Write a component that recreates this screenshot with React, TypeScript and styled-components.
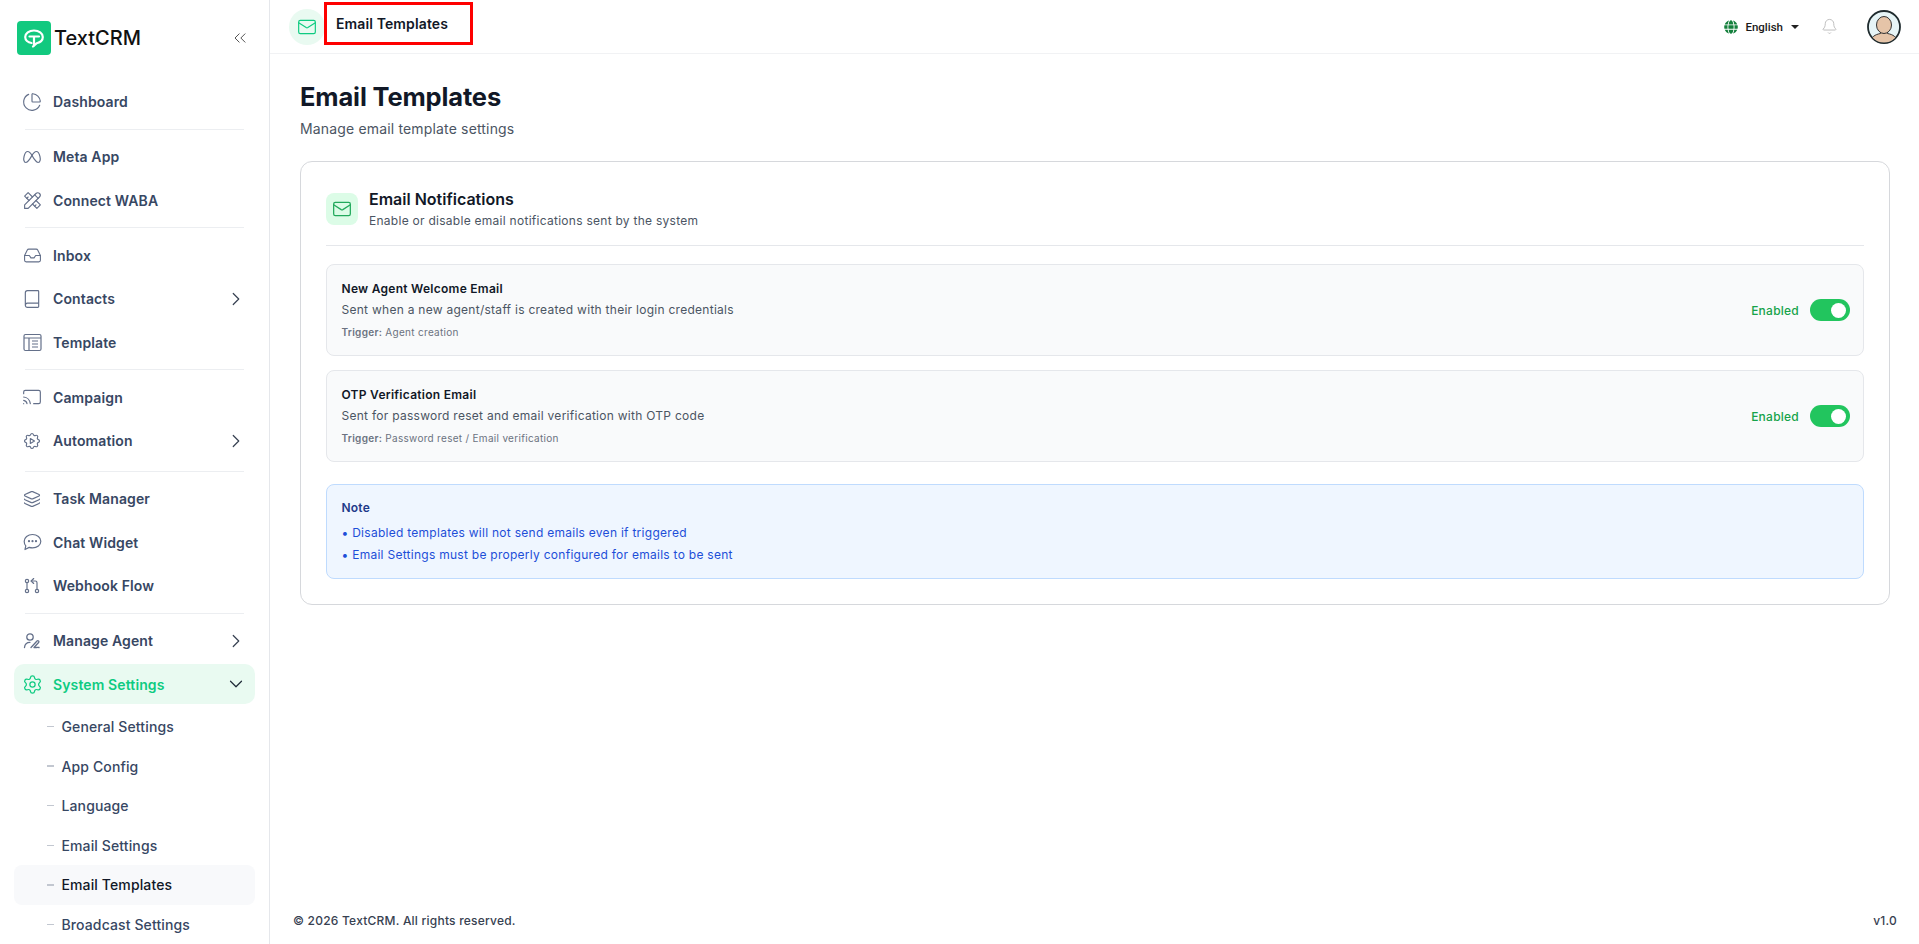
import React from "react";
import styled, { createGlobalStyle } from "styled-components";
import {
  ChevronsLeft, ChevronRight, ChevronDown, ChartPie, Inbox, Book, Cast, Layers,
  Settings, Mail, Bell,
} from "lucide-react";
import { TbBrandMeta, TbTools, TbSettingsAutomation, TbGitPullRequest } from "react-icons/tb";
import { FaGlobe } from "react-icons/fa";

const Global = createGlobalStyle`
  html, body { margin: 0; padding: 0; height: 100%; background: #fff; }
  body { font-family: Inter, "Liberation Sans", sans-serif; overflow: hidden; }
  * { box-sizing: border-box; }
`;

const Shell = styled.div`
  display: flex;
  width: 1919px;
  height: 944px;
  overflow: hidden;
`;

const Sidebar = styled.aside`
  width: 270px;
  flex: none;
  height: 944px;
  border-right: 1px solid #e5e7eb;
  overflow: hidden;
  padding: 21px 14px 0;
`;

const Brand = styled.div`
  display: flex;
  align-items: center;
  height: 34px;
  padding-left: 3px;
  margin-bottom: 26.5px;
`;

const BrandName = styled.span`
  font-family: Inter, sans-serif;
  font-size: 20px;
  font-weight: 500;
  color: #111;
  margin-left: 3px;
  flex: 1;
`;

const CollapseBtn = styled.span`
  display: flex;
  color: #444;
  margin-right: 5px;
`;

const NavItem = styled.div<{ $active?: boolean }>`
  display: flex;
  align-items: center;
  height: 40px;
  margin-bottom: ${(p) => (p.$active ? "2.5px" : "3.5px")};
  padding: 0 8px 0 9px;
  border-radius: 10px;
  font-size: 14px;
  font-weight: 600;
  letter-spacing: 0.12px;
  color: ${(p) => (p.$active ? "#0ecb81" : "#374763")};
  background: ${(p) => (p.$active ? "#e9faf1" : "transparent")};
`;

const NavIcon = styled.span<{ $active?: boolean }>`
  width: 18px;
  height: 18px;
  display: flex;
  align-items: center;
  justify-content: center;
  margin-right: 12px;
  flex: none;
  color: ${(p) => (p.$active ? "#0ecb81" : "#64708a")};
  & > svg { flex: none; }
`;

const NavLabel = styled.span`
  flex: 1;
`;

const Caret = styled.span<{ $dark?: boolean }>`
  display: flex;
  color: ${(p) => (p.$dark ? "#1f2937" : "#374151")};
`;

const Divider = styled.div<{ $tall?: boolean }>`
  height: 1px;
  background: #eceef1;
  margin: ${(p) => (p.$tall ? "10px" : "7px")} 11px 7px;
`;

const SubItem = styled.div<{ $current?: boolean }>`
  display: flex;
  align-items: center;
  height: 40px;
  margin-bottom: -0.4px;
  padding-left: 33px;
  border-radius: 8px;
  font-size: 14px;
  font-weight: 500;
  letter-spacing: 0.12px;
  color: ${(p) => (p.$current ? "#111827" : "#374763")};
  background: ${(p) => (p.$current ? "#f8f9fb" : "transparent")};
  &::before {
    content: "";
    width: 7px;
    height: 1.5px;
    background: #c2c7d0;
    margin-right: 7.5px;
  }
`;

const Column = styled.div`
  flex: 1;
  min-width: 0;
  display: flex;
  flex-direction: column;
`;

const Header = styled.header`
  height: 54px;
  border-bottom: 1px solid #f1f2f4;
  display: flex;
  align-items: center;
  padding: 0 18px 0 19px;
`;

const HeaderIcon = styled.div`
  width: 36px;
  height: 36px;
  margin-right: -1px;
  border-radius: 50%;
  background: #e9faf1;
  color: #0ecb81;
  display: flex;
  align-items: center;
  justify-content: center;
`;

const HeaderTitle = styled.div`
  width: 149px;
  height: 43px;
  margin-bottom: 7px;
  border: 3px solid #fe0000;
  display: flex;
  align-items: center;
  padding-left: 9px;
  font-size: 14px;
  font-weight: 600;
  letter-spacing: 0.12px;
  color: #111827;
`;

const HeaderRight = styled.div`
  margin-left: auto;
  display: flex;
  align-items: center;
`;

const Lang = styled.div`
  display: flex;
  align-items: center;
  font-family: Roboto, sans-serif;
  font-size: 11.5px;
  font-weight: 500;
  gap: 6px;
  color: #15803d;
`;

const LangText = styled.span`
  color: #1a1a1a;
  margin-left: 1px;
`;

const LangCaret = styled.span`
  width: 0;
  height: 0;
  border-left: 4px solid transparent;
  border-right: 4px solid transparent;
  border-top: 4px solid #222;
  margin-left: 2px;
`;

const BellWrap = styled.span`
  display: flex;
  color: #b5b5b5;
  margin: 0 29px 0 22px;
`;

const Main = styled.main`
  flex: 1;
  padding: 25px 29px 0 30px;
`;

const PageTitle = styled.h1`
  margin: 0;
  font-size: 25.5px;
  letter-spacing: -0.15px;
  line-height: 36px;
  font-weight: 700;
  color: #111827;
`;

const PageSub = styled.p`
  margin: 3px 0 0;
  font-size: 14px;
  letter-spacing: 0.16px;
  line-height: 22px;
  color: #4b5563;
`;

const Card = styled.section`
  margin-top: 21px;
  border: 1px solid #d6d8dc;
  border-radius: 12px;
  padding: 25px;
  height: 444px;
`;

const CardHead = styled.div`
  display: flex;
  align-items: center;
  gap: 11px;
  margin-top: 1px;
  padding: 0 0 16px;
  border-bottom: 1px solid #e5e7eb;
`;

const CardIcon = styled.div`
  width: 32px;
  height: 32px;
  border-radius: 8px;
  background: #dcfce7;
  color: #22a95c;
  display: flex;
  align-items: center;
  justify-content: center;
`;

const CardTitle = styled.div`
  font-size: 16px;
  line-height: 22px;
  font-weight: 600;
  color: #111827;
`;

const CardSub = styled.div`
  font-size: 12px;
  letter-spacing: 0.27px;
  line-height: 16px;
  margin-top: 3px;
  color: #4b5563;
`;

const Row = styled.div`
  margin-top: 14px;
  height: 92px;
  border: 1px solid #e5e7eb;
  border-radius: 8px;
  background: #f9fafb;
  padding: 0 13px 0 14.5px;
  display: flex;
  align-items: center;
  justify-content: space-between;
`;

const FirstGap = styled.div`
  height: 4px;
`;

const RowTitle = styled.div`
  font-size: 12px;
  letter-spacing: 0.27px;
  line-height: 18px;
  font-weight: 600;
  color: #111827;
`;

const RowDesc = styled.div`
  font-size: 12px;
  letter-spacing: 0.27px;
  line-height: 18px;
  margin-top: 3px;
  color: #4b5563;
`;

const RowTrigger = styled.div`
  font-size: 10px;
  letter-spacing: 0.3px;
  line-height: 16px;
  margin-top: 5px;
  color: #6b7280;
  & b { font-weight: 600; }
`;

const Status = styled.div`
  display: flex;
  align-items: center;
  gap: 11px;
  font-size: 12px;
  letter-spacing: 0.24px;
  font-weight: 500;
  color: #16a34a;
`;

const Toggle = styled.span`
  width: 40px;
  height: 22px;
  border-radius: 11px;
  background: #22c55e;
  display: flex;
  align-items: center;
  justify-content: flex-end;
  padding-right: 4px;
  &::after {
    content: "";
    width: 15px;
    height: 15px;
    border-radius: 50%;
    background: #fff;
  }
`;

const Note = styled.div`
  margin-top: 22px;
  height: 95px;
  border: 1px solid #bfdbfe;
  border-radius: 8px;
  background: #eff6ff;
  padding: 14px 14.5px;
`;

const NoteTitle = styled.div`
  font-size: 12px;
  letter-spacing: 0.2px;
  line-height: 18px;
  font-weight: 600;
  color: #1e3a8a;
`;

const NoteList = styled.ul`
  list-style: none;
  margin: 5px 0 0;
  padding: 0;
`;

const NoteItem = styled.li`
  font-size: 12px;
  letter-spacing: 0.27px;
  line-height: 22px;
  color: #1d4ed8;
`;

const Footer = styled.footer`
  height: 47px;
  padding: 0 22px 0 23px;
  display: flex;
  align-items: center;
  justify-content: space-between;
  font-size: 12px;
  letter-spacing: 0.22px;
  font-weight: 500;
  color: #374151;
`;

const TemplateIcon = () => (
  <svg width="19" height="19" viewBox="0 0 19 19" fill="none" stroke="currentColor" strokeWidth="1.2">
    <rect x="1" y="1.5" width="17" height="16" rx="1.5" />
    <path d="M1 5h17M6 5v12.500M9 8h6M9 11h6M9 14h6" />
  </svg>
);

const AgentIcon = () => (
  <svg width="18" height="18" viewBox="0 0 18 18" fill="none" stroke="currentColor" strokeWidth="1.3" strokeLinecap="round" strokeLinejoin="round">
    <circle cx="7" cy="5" r="3.200" />
    <path d="M1.500 15.500c.3-3.400 2.400-5.200 5.500-5.200" />
    <path d="M8 15.500l6-6.500c1-1 2.600.4 1.600 1.500L11 15.500c2 .5 3-.5 5 0" />
  </svg>
);

const ChatIcon = () => (
  <svg width="19" height="18" viewBox="0 0 19 18" fill="none" stroke="currentColor" strokeWidth="1.200" strokeLinecap="round" strokeLinejoin="round">
    <path d="M9.500 1.500c4.700 0 8.300 3 8.300 6.700s-3.600 6.700-8.300 6.700c-1.200 0-2.300-.2-3.300-.5L2 16.500l.8-3.600C1.700 11.800 1.200 10 1.200 8.200c0-3.700 3.600-6.700 8.300-6.700z" />
    <circle cx="6" cy="8.200" r=".5" fill="currentColor" />
    <circle cx="9.500" cy="8.200" r=".5" fill="currentColor" />
    <circle cx="13" cy="8.200" r=".5" fill="currentColor" />
  </svg>
);

const Logo = () => (
  <svg width="34" height="34" viewBox="0 0 34 34">
    <rect width="34" height="34" rx="4" fill="#12c97f" />
    <path
      d="M14.500 22c-3.600-.5-6.300-2.900-6.300-6 0-3.700 3.900-6.500 8.800-6.500s8.800 2.800 8.800 6.500c0 3-2.500 5.300-6 6.200l-3.800 3.300"
      fill="none" stroke="#fff" strokeWidth="2.200" strokeLinecap="round" strokeLinejoin="round"
    />
    <path d="M12.500 15.500h9.500M17 15.500v9" fill="none" stroke="#fff" strokeWidth="2.200" strokeLinecap="round" />
  </svg>
);

const Avatar = () => (
  <svg width="34" height="34" viewBox="0 0 34 34">
    <defs>
      <clipPath id="av"><circle cx="17" cy="17" r="15.500" /></clipPath>
    </defs>
    <circle cx="17" cy="17" r="16" fill="#e6f4f6" stroke="#1f2b2e" strokeWidth="1.800" />
    <g clipPath="url(#av)">
      <path d="M4 32c0-5 4-7.500 9.500-8.500v-4h7v4C26 24.500 30 27 30 32v2H4z" fill="#e5c4a8" stroke="#333" strokeWidth="1" />
      <ellipse cx="17" cy="15" rx="7.500" ry="8.500" fill="#e5c4a8" stroke="#333" strokeWidth="1" />
    </g>
  </svg>
);

const car = { size: 22, strokeWidth: 1.3 };

export default function App() {
  return (
    <Shell>
      <Global />
      <Sidebar>
        <Brand>
          <Logo />
          <BrandName>TextCRM</BrandName>
          <CollapseBtn><ChevronsLeft size={20} strokeWidth={1.1} /></CollapseBtn>
        </Brand>
        <NavItem><NavIcon><ChartPie size={20} strokeWidth={1.4} /></NavIcon><NavLabel>Dashboard</NavLabel></NavItem>
        <Divider />
        <NavItem><NavIcon><TbBrandMeta size={22} strokeWidth={1.3} /></NavIcon><NavLabel>Meta App</NavLabel></NavItem>
        <NavItem><NavIcon><TbTools size={21} strokeWidth={1.3} /></NavIcon><NavLabel>Connect WABA</NavLabel></NavItem>
        <Divider />
        <NavItem><NavIcon><Inbox size={19} strokeWidth={1.4} /></NavIcon><NavLabel>Inbox</NavLabel></NavItem>
        <NavItem><NavIcon><Book size={20} strokeWidth={1.4} /></NavIcon><NavLabel>Contacts</NavLabel><Caret><ChevronRight {...car} /></Caret></NavItem>
        <NavItem><NavIcon><TemplateIcon /></NavIcon><NavLabel>Template</NavLabel></NavItem>
        <Divider />
        <NavItem><NavIcon><Cast size={20} strokeWidth={1.4} /></NavIcon><NavLabel>Campaign</NavLabel></NavItem>
        <NavItem><NavIcon><TbSettingsAutomation size={20} strokeWidth={1.4} /></NavIcon><NavLabel>Automation</NavLabel><Caret><ChevronRight {...car} /></Caret></NavItem>
        <Divider $tall />
        <NavItem><NavIcon><Layers size={18} strokeWidth={1.5} /></NavIcon><NavLabel>Task Manager</NavLabel></NavItem>
        <NavItem><NavIcon><ChatIcon /></NavIcon><NavLabel>Chat Widget</NavLabel></NavItem>
        <NavItem><NavIcon><TbGitPullRequest size={20} strokeWidth={1.4} /></NavIcon><NavLabel>Webhook Flow</NavLabel></NavItem>
        <Divider />
        <NavItem><NavIcon><AgentIcon /></NavIcon><NavLabel>Manage Agent</NavLabel><Caret><ChevronRight {...car} /></Caret></NavItem>
        <NavItem $active>
          <NavIcon $active><Settings size={21} strokeWidth={1.4} /></NavIcon>
          <NavLabel>System Settings</NavLabel>
          <Caret $dark><ChevronDown {...car} /></Caret>
        </NavItem>
        <SubItem>General Settings</SubItem>
        <SubItem>App Config</SubItem>
        <SubItem>Language</SubItem>
        <SubItem>Email Settings</SubItem>
        <SubItem $current>Email Templates</SubItem>
        <SubItem>Broadcast Settings</SubItem>
      </Sidebar>
      <Column>
        <Header>
          <HeaderIcon><Mail size={20} strokeWidth={1.4} /></HeaderIcon>
          <HeaderTitle>Email Templates</HeaderTitle>
          <HeaderRight>
            <Lang>
              <FaGlobe size={14} />
              <LangText>English</LangText>
              <LangCaret />
            </Lang>
            <BellWrap><Bell size={17} strokeWidth={1.2} /></BellWrap>
            <Avatar />
          </HeaderRight>
        </Header>
        <Main>
          <PageTitle>Email Templates</PageTitle>
          <PageSub>Manage email template settings</PageSub>
          <Card>
            <CardHead>
              <CardIcon><Mail size={20} strokeWidth={1.5} /></CardIcon>
              <div>
                <CardTitle>Email Notifications</CardTitle>
                <CardSub>Enable or disable email notifications sent by the system</CardSub>
              </div>
            </CardHead>
            <FirstGap />
            <Row>
              <div>
                <RowTitle>New Agent Welcome Email</RowTitle>
                <RowDesc>Sent when a new agent/staff is created with their login credentials</RowDesc>
                <RowTrigger><b>Trigger:</b> Agent creation</RowTrigger>
              </div>
              <Status>Enabled<Toggle /></Status>
            </Row>
            <Row>
              <div>
                <RowTitle>OTP Verification Email</RowTitle>
                <RowDesc>Sent for password reset and email verification with OTP code</RowDesc>
                <RowTrigger><b>Trigger:</b> Password reset / Email verification</RowTrigger>
              </div>
              <Status>Enabled<Toggle /></Status>
            </Row>
            <Note>
              <NoteTitle>Note</NoteTitle>
              <NoteList>
                <NoteItem>• Disabled templates will not send emails even if triggered</NoteItem>
                <NoteItem>• Email Settings must be properly configured for emails to be sent</NoteItem>
              </NoteList>
            </Note>
          </Card>
        </Main>
        <Footer>
          <span>© 2026 TextCRM. All rights reserved.</span>
          <span>v1.0</span>
        </Footer>
      </Column>
    </Shell>
  );
}
